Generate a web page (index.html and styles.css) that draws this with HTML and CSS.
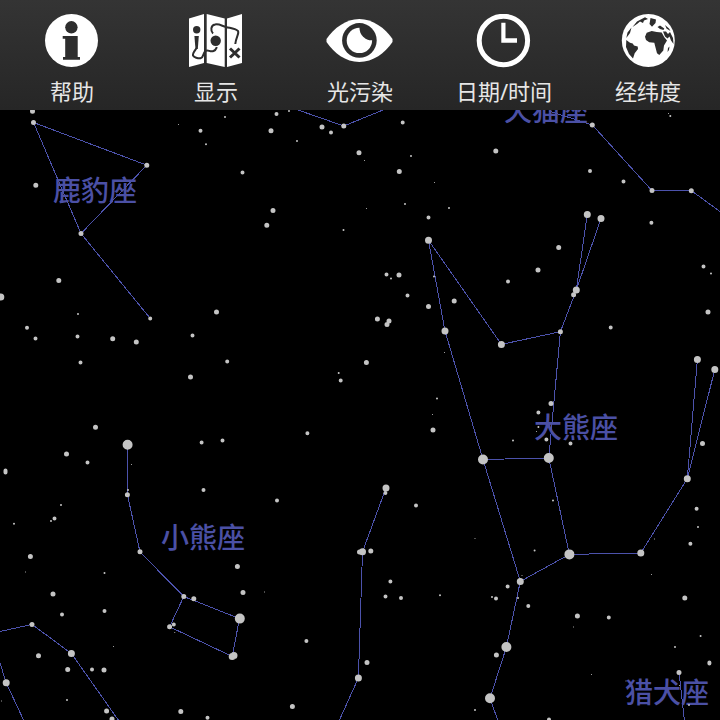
FILE: index.html
```html
<!DOCTYPE html>
<html lang="zh-CN">
<head>
<meta charset="utf-8">
<meta name="viewport" content="width=device-width, initial-scale=1">
<title>星图</title>
<link rel="stylesheet" href="styles.css">
</head>
<body>
<nav class="toolbar">
  <button class="tool" type="button">
    <svg class="icon" viewBox="0 0 72 54" aria-hidden="true">
      <circle cx="35.5" cy="26.5" r="26.5"/>
      <circle class="cut" cx="35.4" cy="13.3" r="6.2"/>
      <path class="cut" d="M26.7 22H41.7V43H44V45.7H27V43H29.2V24.7H26.7Z"/>
    </svg>
    <span>帮助</span>
  </button>
  <button class="tool" type="button">
    <svg class="icon" viewBox="0 0 72 54" aria-hidden="true">
      <path d="M9 4.4 24 0V49L9 53ZM26.7 0 44.7 4.4V53L26.7 49ZM47 4.4 62 0V49L47 53Z"/>
      <circle class="cut" cx="16.7" cy="15.7" r="3.7"/>
      <path class="cut" d="M14.4 22H18.8L17.8 35H15.5Z"/>
      <circle class="cut" cx="35.7" cy="26.7" r="5.2"/>
      <path class="trail" d="M16.6 34C14.5 37 12.5 39 13 41.5C14 43.5 18 44.5 20.5 44.3C24 43.5 22.5 39.5 25.5 37C28 35 30 38.5 33.5 37C36 36 36 35 36.8 33M33 19.5C30.500 17 30.500 11.500 35 10.500C39 9.500 42 12 46 13C51 14.300 55 14.500 58 17C59.500 19.500 56 23 55.300 30"/>
      <path class="trail cross" d="M50 34.500 59.500 43.500M59.500 34.500 50 43.500"/>
    </svg>
    <span>显示</span>
  </button>
  <button class="tool" type="button">
    <svg class="icon" viewBox="0 0 72 54" aria-hidden="true">
      <clipPath id="iris"><circle cx="35.4" cy="26.4" r="15"/></clipPath>
      <path d="M2.500 25C10 14 22 5 35.300 5S61 14 68.500 25V28C61 39 49 48 35.300 48S10 39 2.500 28Z"/>
      <circle class="cut" cx="35.400" cy="26.400" r="17.300"/>
      <circle cx="35.400" cy="26.400" r="12.700"/>
      <circle class="cut" cx="47.800" cy="14" r="12.300" clip-path="url(#iris)"/>
    </svg>
    <span>光污染</span>
  </button>
  <button class="tool" type="button">
    <svg class="icon" viewBox="0 0 72 54" aria-hidden="true">
      <circle class="ring" cx="35.400" cy="26.500" r="24.200"/>
      <path d="M33.300 8.700H37.500V24.300H49V28.700H33.300Z"/>
    </svg>
    <span>日期/时间</span>
  </button>
  <button class="tool" type="button">
    <svg class="icon" viewBox="0 0 72 54" aria-hidden="true">
      <circle cx="36.300" cy="26.500" r="26.500"/>
      <path class="cut" d="M14.300 26 18 28.700 20.700 29.500 22 31.500 25.700 32.500 26 35 22.700 39.300 21 44.500 17 40 14 33ZM33 22.700 34.700 18.700 39.700 17 44.700 18 49.700 18.500 52.300 23.300 55 26.500 52 31.500 51.300 36.500 47.300 41 45 39.300 43.700 34.300 42.300 28.700 37.300 28.300 34 26ZM51 17.500 54 17.500 56 20 58 18 61 24 61.500 30 59 26.500 57.500 22.500 55.500 24.500 53 22.500ZM45.500 13 48 11.500 52.300 14.500 51.500 16 48 15ZM53 11 57 14.500 58.500 17 54.500 14.500ZM38.500 4 44 5.500 43.500 9 40 12.700 37.500 10ZM20.500 13 25 7.500 33 3.300 36 5 32 6.500 31 9 28 7.500 25 10ZM14.300 24 15.500 18.500 19.500 13.500 18 19ZM56 34 57.500 32.500 57 36 55.500 38Z"/>
    </svg>
    <span>经纬度</span>
  </button>
</nav>
<main class="sky">
  <svg class="chart" viewBox="0 110 720 610" preserveAspectRatio="xMidYMin slice" role="img" aria-label="星图">
    <path class="lines" d="M81 233.500 33.500 122.500 146.800 165.200 81 233.500 150.300 318.500M298 110 343.800 126 383 110M549 111 592.300 125 652 190.600H691.300L722 213
      M501.400 344.400 428.500 240.300 445 331 483 459.500 520.300 581.400 569.400 554.400 548.800 458 560.400 331.700 501.400 344.400M483 459.500 548.800 458M560.400 331.700 576.300 290 587.300 214.400M576.300 290 601 218.500
      M569.400 554.400 640.800 553 687.300 478.700 697.400 359.400M687.300 478.700 714.800 369.500M520.300 581.400 506.400 647 490 698.300 498 721M679 672.600 684.500 721
      M127.500 445V495L140 552 183.800 596.500 239.500 618.600 232.200 656.500 169.600 626.800 183.800 596.500M0 631.500 32 624.400 71.400 653.500 119 721M0 663 6.200 682.800 24 721M386 488 362.500 551.800 358.400 678 339 721"/>
    <g class="names">
      <text x="95" y="201">鹿豹座</text>
      <text x="546" y="121">天猫座</text>
      <text x="576" y="438">大熊座</text>
      <text x="203" y="548">小熊座</text>
      <text x="667" y="703">猎犬座</text>
    </g>
    <g class="stars">
      <path class="mag7" d="M178.500 124.500h0M364.500 160.500h0M434.500 182.500h0M366.500 208.500h0M668.500 113.500h0M131.500 464.500h0M444.500 352.500h0M432.500 414.500h0M536.500 431.500h0M25.500 572h0M174.800 632.500h0M113.500 646.500h0M1.500 701h0M264.500 592h0M475 538.500h0M654.500 539h0M522 575.500h0M651.500 574.500h0M573.500 627h0M591.500 674.500h0M626 681h0M679.500 685.500h0"/>
      <path class="mag6" d="M225 117h0M206 144.300h0M289 111h0M297 141h0M411 156h0M405 204h0M343.500 230h0M449 208h0M391 278.500h0M434 276.400h0M711 273.400h0M78 314h0M128 490h0M61 505h0M338.700 373h0M437 398.400h0M538.400 427h0M513 440.400h0M553 500.600h0M14 523.800h0M51 521h0M104.500 573h0M67 700h0M440 595.300h0M475 710h0M698 527h0M534.600 550.400h0M492 597h0M518 598h0M700.600 636h0M675 647h0M689 705h0M670.300 116h0"/>
      <path class="mag5" d="M200.500 130.800h0M276.500 114h0M331 132.400h0M402.700 122.400h0M242.500 172.400h0M428.500 217.500h0M386.500 274.500h0M407.500 295.500h0M590 171h0M623.500 181.400h0M651.400 222.700h0M508 281.400h0M703.500 266.400h0M150.200 318.500h0M27 327.800h0M35.500 338.400h0M77.500 336.400h0M192.500 335.500h0M80.500 362.500h0M227.200 361.400h0M201.600 442.500h0M222.500 440.500h0M87.500 462.400h0M5.500 470.500v2M203.500 490h0M340.700 380.400h0M307.400 433.300h0M277 500.400h0M385.400 493h0M416 505.600h0M610.700 327.400h0M538.400 412.400h0M546.400 439.400h0M570.500 443.400h0M696.600 508.800h0M54.500 518.400h0M62 614.500h0M104.500 611h0M173.800 624.400h0M92 669.400h0M207.500 717.800h0M390.400 581.500h0M385.500 596.400h0M401 598h0M306.400 641h0M690.400 543.700h0M507.600 586.600h0M496 598.500h0M528.300 606h0M608.800 617.400h0M709.400 662.500v1M549 719.500h0"/>
      <path class="mag4" d="M32.500 111.300h0M35.800 185.200h0M271 130.800h0M322 127h0M359 152.800h0M399.300 171.400h0M273 210.400h0M266.800 225.300h0M399 275h0M428.500 306.600h0M454.200 301h0M495.800 151h0M538 270h0M112.700 338.800h0M136.300 342h0M190.500 377h0M377.400 319h0M389 321h0M387 324.600h0M433 430h0M708 312h0M551 403.400h0M53 594h0M237.400 566.500h0M193.800 598.700h0M169.600 626.800h0M38.500 655.800h0M104 670h0M106.600 711h0M112 719h0M180.800 711.500h0M359.500 552h0M370.800 551h0M367 662.600h0M684.800 598h0M577.400 616h0M496.400 655h0"/>
      <path class="mag3" d="M33.500 122.500h0M146.800 165.200h0M81 233.500h0M58.800 280.500h0M343.800 126h0M592.300 125h0M652 190.600h0M691.300 190.700h0M558.700 247.400h0M573.600 294.700h0M216.500 312h0M95.500 427.300h0M66.500 454h0M127.400 494.700h0M366.400 362.600h0M560.400 331.700h0M702.500 443.500h0M30.400 556.600h0M140 551.800h0M183.800 596.500h0M32 624.400h0M67.700 669.500h0M243 592.500h0M292.400 706.400h0M679 672.600h0"/>
      <path class="mag2" d="M.8 297h0M601 218.500h0M445 331h0M386 488h0M501.400 344.400h0M362.500 551.800h0M358.400 678h0M640.800 553h0"/>
      <path class="mag1" d="M428.500 240.300h0M587.300 214.400h0M576.300 290h0M697.400 359.400h0M714.800 369.500h0M687.300 478.700h0M71.400 653.500h0M6.200 682.800h0M520.300 581.400h0M232.200 656.500h0M234 655.500h0"/>
      <path class="mag0" d="M127.600 444.800h0M483 459.500h0M548.800 458h0M239.800 618.600h0M569.400 554.400h0M506.400 647h0M490 698.300h0"/>
    </g>
  </svg>
</main>
</body>
</html>
```
FILE: styles.css
```css
* {
  box-sizing: border-box;
}

body {
  margin: 0;
  min-height: 100vh;
  display: flex;
  flex-direction: column;
  background: #000;
  font-family: "Noto Sans", "Noto Sans CJK SC", sans-serif;
}

.toolbar {
  display: grid;
  grid-template-columns: repeat(5, 1fr);
  background: linear-gradient(#343434, #262626);
}

.tool {
  display: flex;
  flex-direction: column;
  align-items: center;
  gap: 8px;
  padding: 14px 0 4px;
  border: 0;
  background: none;
  color: #e6e6e6;
  font: 22px/30px "Noto Sans", "Noto Sans CJK SC", sans-serif;
  white-space: nowrap;
  cursor: pointer;
}

.icon {
  display: block;
  width: 72px;
  height: 54px;
  fill: #fff;
}

.icon .cut {
  fill: #2d2d2d;
}

.icon .trail {
  fill: none;
  stroke: #2d2d2d;
  stroke-width: 2;
}

.icon .cross {
  stroke-width: 3;
}

.icon .ring {
  fill: none;
  stroke: #fff;
  stroke-width: 5;
}

.sky {
  flex: 1;
  display: flex;
  overflow: hidden;
}

.chart {
  display: block;
  width: 100%;
}

.lines {
  fill: none;
  stroke: #4c52ac;
  stroke-width: 1;
  shape-rendering: crispEdges;
}

.names {
  fill: #4b50a5;
  font: 500 28px "Noto Sans CJK SC", sans-serif;
  text-anchor: middle;
}

.stars {
  fill: none;
  stroke: #c4c4c4;
  stroke-linecap: round;
}

.mag0 { stroke-width: 10; }
.mag1 { stroke-width: 7; }
.mag2 { stroke-width: 7; }
.mag3 { stroke-width: 5; }
.mag4 { stroke-width: 5; }
.mag5 { stroke-width: 4; }
.mag6 { stroke-width: 2; }
.mag7 { stroke-width: 1; }
```
